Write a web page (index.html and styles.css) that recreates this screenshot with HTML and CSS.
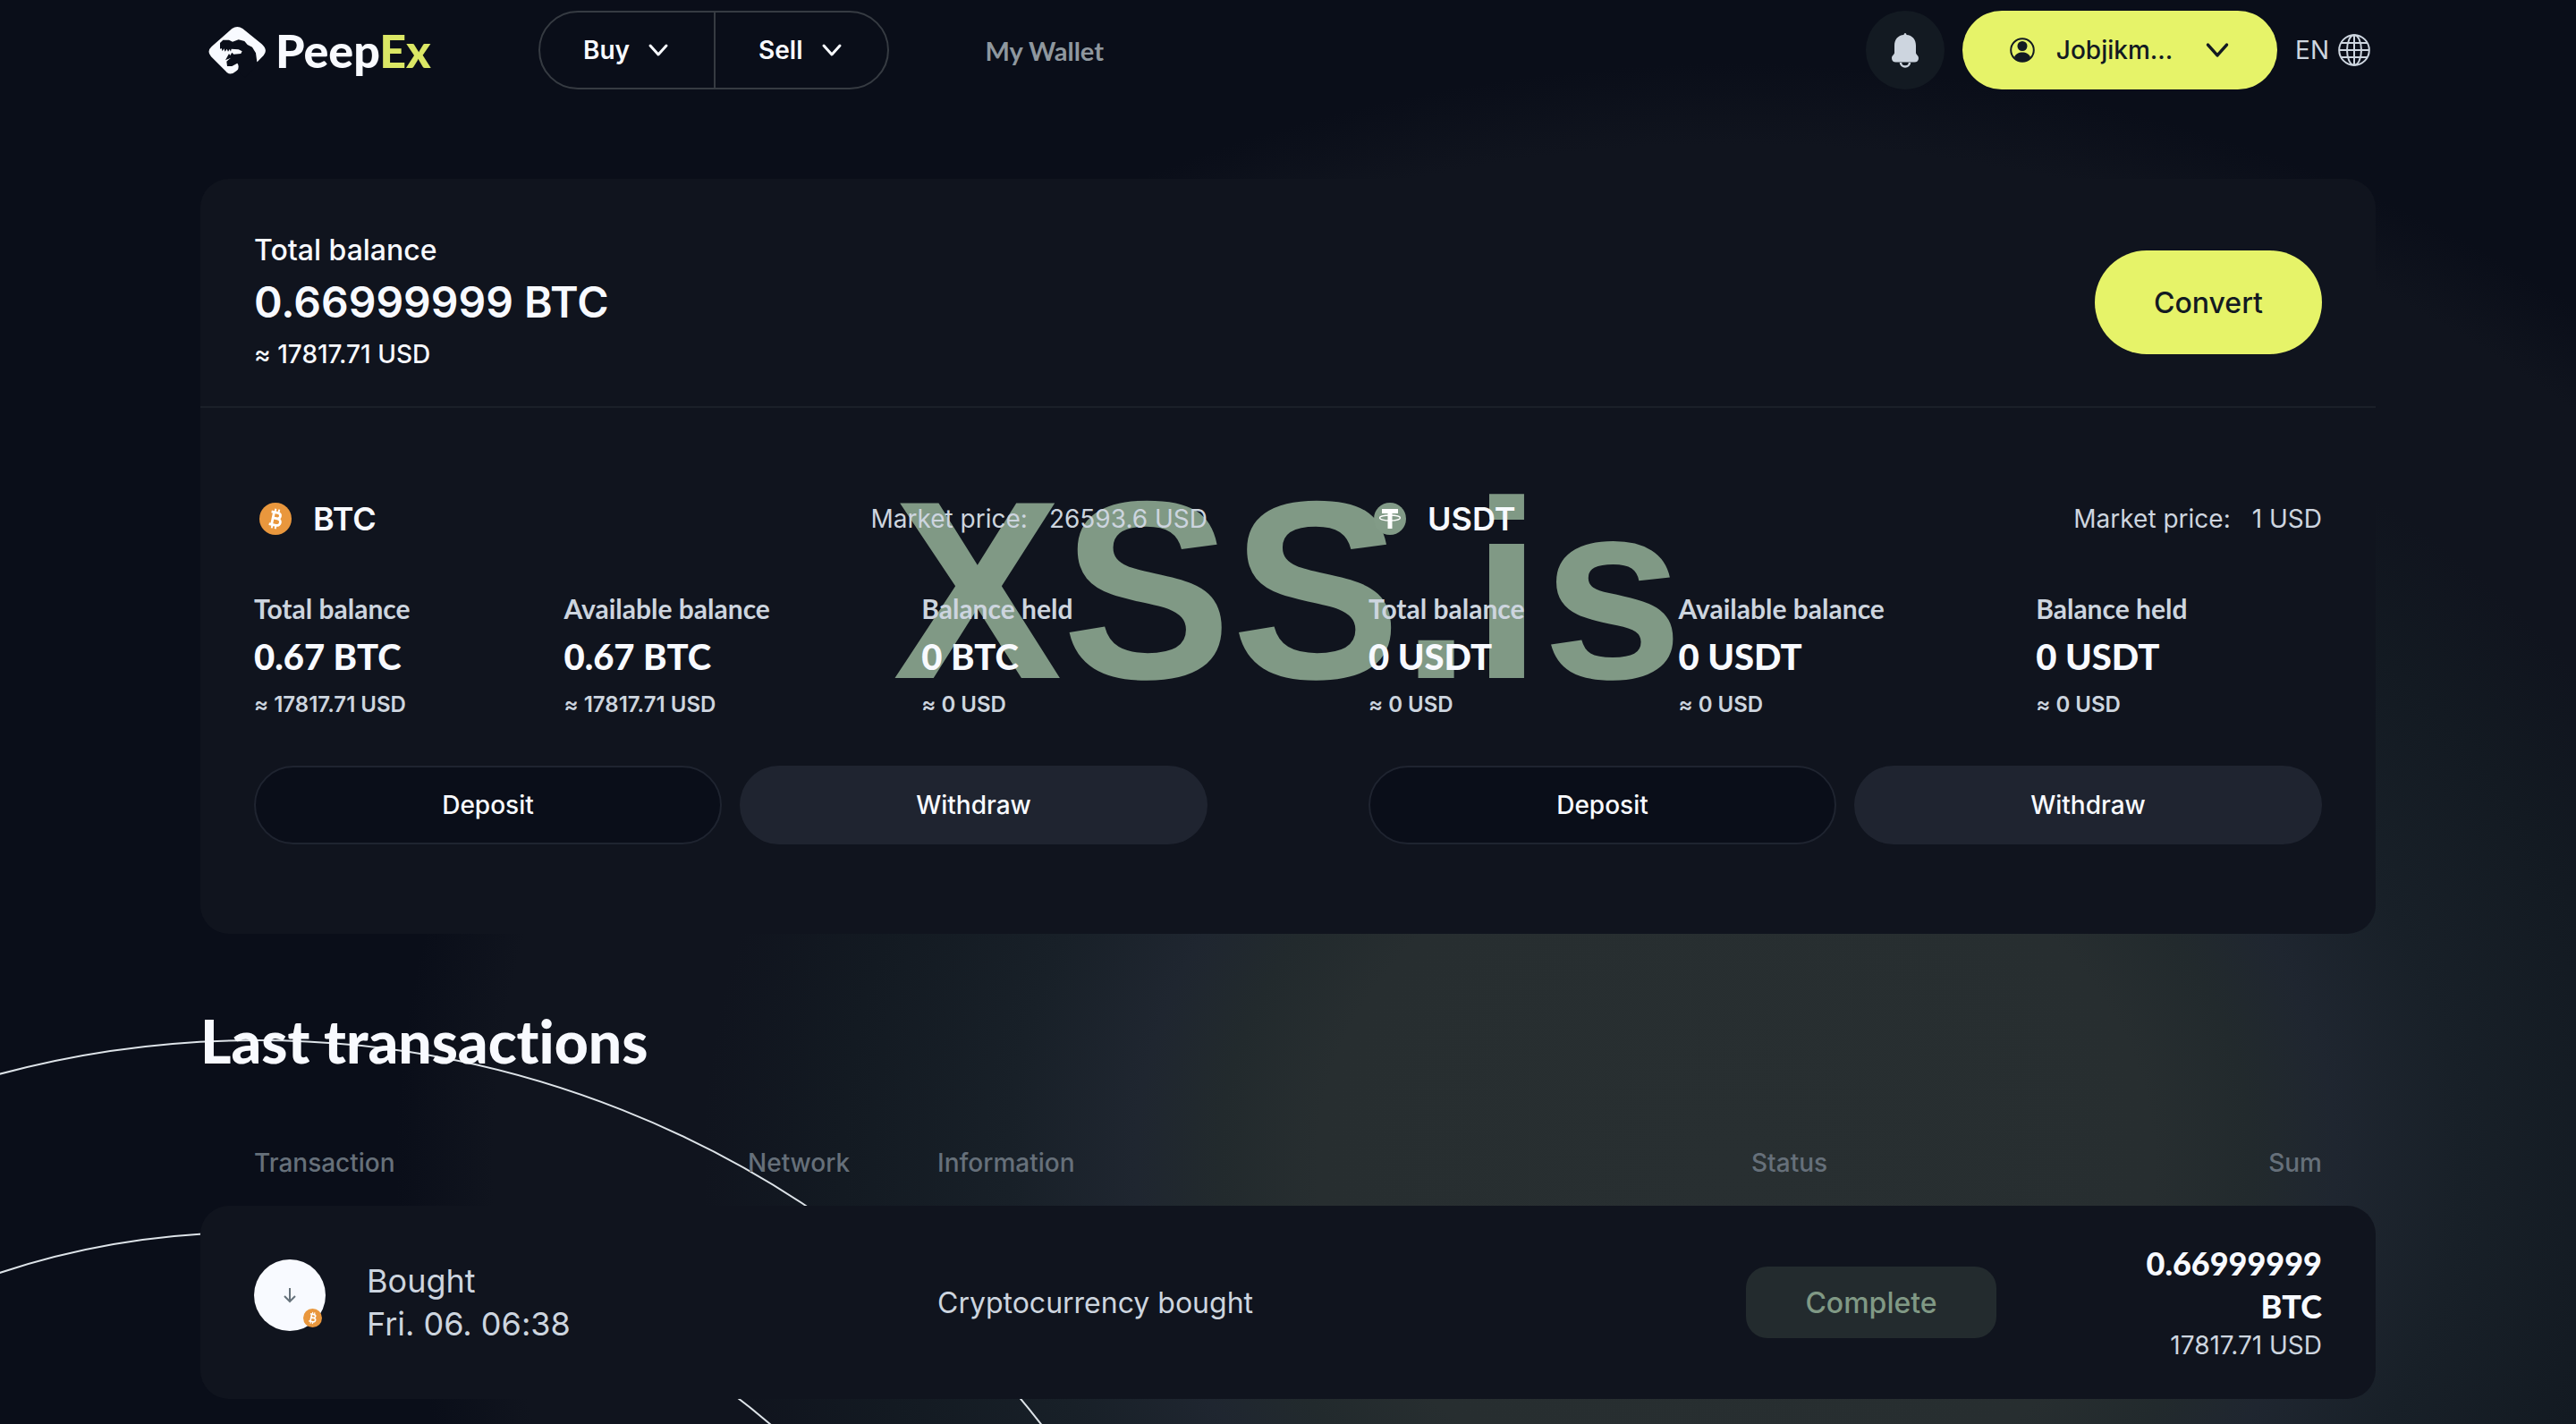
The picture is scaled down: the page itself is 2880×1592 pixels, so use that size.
FILE: index.html
```html
<!DOCTYPE html>
<html lang="en">
<head>
  <meta charset="UTF-8" />
  <meta name="viewport" content="width=device-width, initial-scale=1" />
  <title>PeepEx - My Wallet</title>
  <link rel="stylesheet" href="styles.css">
</head>
<body>
  <!-- Shared icons -->
  <svg class="sprite" aria-hidden="true">
    <symbol id="icon-chevron" viewBox="0 0 24 24">
      <path d="M3 7 L12 17 L21 7" fill="none" stroke="currentColor" stroke-width="3" stroke-linecap="round" stroke-linejoin="round" />
    </symbol>
    <symbol id="icon-btc" viewBox="0 0 36 36">
      <circle cx="18" cy="18" r="18" fill="#e9973d" />
      <g transform="rotate(12 18 18)" fill="none" stroke="#fff" stroke-width="2.8">
        <path d="M12 11 H19 C24 11 24 17.5 19 17.5 H15 H20 C25.5 17.5 25.5 25 20 25 H12" />
        <path d="M15 11 V25" />
        <path d="M16 7 V11 M20 7 V11 M16 25 V29 M20 25 V29" stroke-width="2" />
      </g>
    </symbol>
    <symbol id="icon-usdt" viewBox="0 0 36 36">
      <circle cx="18" cy="18" r="18" fill="#829b87" />
      <path d="M9 7 H27 V12 H20.500 V29 H15.500 V12 H9 Z" fill="#fff" />
      <ellipse cx="18" cy="17" rx="11.500" ry="3" fill="none" stroke="#fff" stroke-width="1.300" />
    </symbol>
  </svg>

  <!-- Decorative rings -->
  <svg class="rings" aria-hidden="true">
    <circle cx="287" cy="2273" r="1110" />
    <circle cx="280" cy="2273" r="895" />
  </svg>

  <header>
    <a href="#" class="logo">
      <svg class="logo-icon" viewBox="0 0 252 228" aria-hidden="true">
        <path d="M106 42 Q124 30 142 42 L206 94 Q228 114 212 132 L150 196 L126 180 L118 186 Q98 202 84 184 L36 136 Q20 118 38 102 Z" fill="#f8faff" />
        <path d="M66 110 L66 90 L76 80 L96 80 L108 86 L128 79 L148 84 L158 96 L174 104 L186 124 L190 154 L200 156 L150 206 L124 184 Q132 168 124 158 L106 168 L90 168 L88 152 L102 140 L84 148 L96 126 L100 132 L106 122 L112 128 L136 126 L140 118 L128 112 L104 110 L102 119 L98 111 L93 119 L89 110 L83 119 L79 109 L74 118 L71 108 Z" fill="#0a0e19" />
      </svg>
      <span class="logo-text">Peep<span class="accent">Ex</span></span>
    </a>

    <nav>
      <div class="trade">
        <button type="button">Buy <svg class="chevron"><use href="#icon-chevron" /></svg></button>
        <button type="button">Sell <svg class="chevron"><use href="#icon-chevron" /></svg></button>
      </div>
      <a href="#" class="nav-link">My Wallet</a>
    </nav>

    <div class="header-right">
      <button type="button" class="bell" aria-label="Notifications">
        <svg viewBox="0 0 36 44" aria-hidden="true">
          <path d="M18 3 C19 3 19.500 4 19.500 5 C26 5.500 30 10 30 17 V25 C30 27 33 28 33 31 C33 34 31 35.500 28.500 35.500 H7.500 C5 35.500 3 34 3 31 C3 28 6 27 6 25 V17 C6 10 10 5.500 16.500 5 C16.500 4 17 3 18 3 Z" fill="#cdd5df" />
          <path d="M13 36 A5 4.500 0 0 0 23 36" fill="none" stroke="#cdd5df" stroke-width="2.500" />
        </svg>
      </button>
      <button type="button" class="user">
        <svg class="user-icon" viewBox="0 0 28 28" aria-hidden="true">
          <circle cx="14" cy="14" r="12.800" fill="none" stroke="currentColor" stroke-width="2" />
          <circle cx="14" cy="9.500" r="5.500" fill="currentColor" />
          <path d="M5 22 C7 14.500 21 14.500 23 22 C19 28 9 28 5 22 Z" fill="currentColor" />
        </svg>
        <span>Jobjikm...</span>
        <svg class="chevron big"><use href="#icon-chevron" /></svg>
      </button>
      <button type="button" class="lang">
        EN
        <svg viewBox="0 0 36 36" aria-hidden="true">
          <g fill="none" stroke="currentColor" stroke-width="2">
            <circle cx="18" cy="18" r="16.800" />
            <ellipse cx="18" cy="18" rx="8" ry="16.800" />
            <path d="M18 1 V35 M1 18 H35 M4 10 H32 M4 26 H32" />
          </g>
        </svg>
      </button>
    </div>
  </header>

  <main>
    <section class="wallet">
      <div class="watermark">XSS.is</div>

      <div class="wallet-head">
        <div>
          <div class="total-label">Total balance</div>
          <div class="total-amount">0.66999999 BTC</div>
          <div class="total-usd">≈ 17817.71 USD</div>
        </div>
        <button type="button" class="convert">Convert</button>
      </div>

      <div class="coins">
        <div class="coin">
          <div class="coin-head">
            <svg class="coin-icon"><use href="#icon-btc" /></svg>
            <h2>BTC</h2>
            <p class="price"><span>Market price:</span><span>26593.6 USD</span></p>
          </div>
          <div class="balances">
            <div class="balance">
              <span class="label">Total balance</span>
              <span class="value">0.67 BTC</span>
              <span class="usd">≈ 17817.71 USD</span>
            </div>
            <div class="balance">
              <span class="label">Available balance</span>
              <span class="value">0.67 BTC</span>
              <span class="usd">≈ 17817.71 USD</span>
            </div>
            <div class="balance">
              <span class="label">Balance held</span>
              <span class="value">0 BTC</span>
              <span class="usd">≈ 0 USD</span>
            </div>
          </div>
          <div class="actions">
            <button type="button" class="deposit">Deposit</button>
            <button type="button" class="withdraw">Withdraw</button>
          </div>
        </div>

        <div class="coin">
          <div class="coin-head">
            <svg class="coin-icon"><use href="#icon-usdt" /></svg>
            <h2>USDT</h2>
            <p class="price"><span>Market price:</span><span>1 USD</span></p>
          </div>
          <div class="balances">
            <div class="balance">
              <span class="label">Total balance</span>
              <span class="value">0 USDT</span>
              <span class="usd">≈ 0 USD</span>
            </div>
            <div class="balance">
              <span class="label">Available balance</span>
              <span class="value">0 USDT</span>
              <span class="usd">≈ 0 USD</span>
            </div>
            <div class="balance">
              <span class="label">Balance held</span>
              <span class="value">0 USDT</span>
              <span class="usd">≈ 0 USD</span>
            </div>
          </div>
          <div class="actions">
            <button type="button" class="deposit">Deposit</button>
            <button type="button" class="withdraw">Withdraw</button>
          </div>
        </div>
      </div>
    </section>

    <section class="transactions">
      <h1>Last transactions</h1>
      <table>
        <thead>
          <tr>
            <th class="col-type">Transaction</th>
            <th class="col-network">Network</th>
            <th>Information</th>
            <th class="col-status">Status</th>
            <th class="col-sum">Sum</th>
          </tr>
        </thead>
        <tbody>
          <tr>
            <td class="col-type">
              <div class="type">
                <div class="type-icon">
                  <svg class="arrow" viewBox="0 0 16 18" aria-hidden="true">
                    <path d="M8 1 V16 M2 10 L8 16 L14 10" fill="none" stroke="#66727b" stroke-width="2" />
                  </svg>
                  <svg class="badge"><use href="#icon-btc" /></svg>
                </div>
                <div>Bought<br>Fri. 06. 06:38</div>
              </div>
            </td>
            <td class="col-network"></td>
            <td class="info">Cryptocurrency bought</td>
            <td class="col-status"><span class="status">Complete</span></td>
            <td class="col-sum">
              <div class="sum">0.66999999<br>BTC</div>
              <div class="sum-usd">17817.71 USD</div>
            </td>
          </tr>
        </tbody>
      </table>
    </section>
  </main>
</body>
</html>
```

FILE: styles.css
```css
* {
  box-sizing: border-box;
}

body {
  margin: 0;
  min-height: 100vh;
  position: relative;
  overflow: hidden;
  font-family: Inter, "Liberation Sans", sans-serif;
  font-size: 28px;
  font-variant-ligatures: none;
  color: #f8faff;
  background-color: #0a0e19;
  background-image: radial-gradient(ellipse 1560px 1280px at 1940px 1300px, #282f31 0%, #272e30 30%, #222a2d 37%, #1f2630 43%, #182028 52%, #131a22 64%, #10141e 74%, #10141e 89%, #0a0e19 96%);
}

button {
  font-family: inherit;
  border: none;
  background: none;
  color: inherit;
  padding: 0;
  cursor: pointer;
}

a {
  text-decoration: none;
  color: inherit;
}

.sprite {
  position: absolute;
  width: 0;
  height: 0;
}

.rings {
  position: absolute;
  top: 0;
  left: 0;
  width: 100%;
  height: 100%;
  pointer-events: none;
}

.rings circle {
  fill: none;
  stroke: #dde3e8;
  stroke-width: 2;
}

/* Header */
header {
  position: relative;
  display: flex;
  align-items: center;
  margin: 0 224px;
  padding-top: 12px;
}

.logo {
  display: flex;
  align-items: center;
  width: 378px;
}

.logo-icon {
  width: 84px;
  height: 76px;
}

.logo-text {
  font-family: Lato, sans-serif;
  font-weight: 900;
  font-size: 52px;
}

.accent {
  color: #dbe765;
}

nav {
  display: flex;
  align-items: center;
  gap: 108px;
}

.trade {
  display: flex;
  height: 88px;
  border: 2px solid #363b42;
  border-radius: 44px;
}

.trade button {
  display: flex;
  align-items: center;
  gap: 20px;
  padding: 0 50px 0 48px;
  font-size: 28px;
  font-weight: 600;
}

.trade button + button {
  border-left: 2px solid #363b42;
}

.chevron {
  width: 24px;
  height: 24px;
}

.chevron.big {
  width: 28px;
  height: 28px;
  margin-left: 12px;
}

.nav-link {
  font-family: Lato, sans-serif;
  font-weight: 700;
  font-size: 29px;
  color: #8f989f;
}

.header-right {
  display: flex;
  align-items: center;
  gap: 20px;
  margin-left: auto;
}

.bell {
  display: flex;
  align-items: center;
  justify-content: center;
  width: 88px;
  height: 88px;
  border-radius: 50%;
  background: #131a22;
}

.bell svg {
  width: 36px;
  height: 44px;
}

.user {
  display: flex;
  align-items: center;
  justify-content: center;
  gap: 24px;
  width: 352px;
  height: 88px;
  border-radius: 44px;
  background: #e6f369;
  color: #131a22;
  font-size: 28px;
  font-weight: 500;
}

.user-icon {
  width: 28px;
  height: 28px;
}

.lang {
  display: flex;
  align-items: center;
  gap: 10px;
  padding-right: 6px;
  font-size: 28px;
  color: #cdd5df;
}

.lang svg {
  width: 36px;
  height: 36px;
}

main {
  position: relative;
  margin: 100px 224px 0;
}

/* Wallet card */
.wallet {
  position: relative;
  z-index: 0;
  border-radius: 32px;
  background: #10141e;
}

.watermark {
  position: absolute;
  top: 300px;
  left: 50%;
  transform: translateX(-50%);
  z-index: -1;
  font-family: "Liberation Sans", Arial, sans-serif;
  font-weight: 700;
  font-size: 284px;
  line-height: 320px;
  color: #809985;
}

.wallet-head {
  display: flex;
  align-items: center;
  justify-content: space-between;
  padding: 56px 60px 34px;
  border-bottom: 2px solid #1b2029;
}

.total-label {
  font-size: 32px;
  font-weight: 500;
  line-height: 48px;
}

.total-amount {
  font-size: 48px;
  font-weight: 600;
  line-height: 68px;
}

.total-usd {
  font-size: 28px;
  font-weight: 500;
  line-height: 48px;
}

.convert {
  width: 254px;
  height: 116px;
  border-radius: 58px;
  background: #e6f369;
  color: #131a22;
  font-size: 32px;
  font-weight: 500;
}

.coins {
  display: grid;
  grid-template-columns: 1fr 1fr;
  gap: 180px;
  padding: 100px 60px;
}

.coin-head {
  display: flex;
  align-items: center;
  height: 48px;
}

.coin-icon {
  width: 36px;
  height: 36px;
  margin: 0 24px 0 6px;
}

.coin-head h2 {
  margin: 0;
  font-size: 36px;
  font-weight: 600;
}

.price {
  display: flex;
  gap: 24px;
  margin: 0 0 0 auto;
  color: #cdd5df;
}

.balances {
  display: grid;
  grid-template-columns: 13fr 15fr 12fr;
  margin-top: 56px;
}

.balance {
  display: flex;
  flex-direction: column;
  gap: 6px;
}

.label {
  font-family: Lato, sans-serif;
  font-size: 30px;
  font-weight: 700;
  line-height: 40px;
  color: #cdd5df;
}

.value {
  font-family: Lato, sans-serif;
  font-size: 40px;
  font-weight: 900;
  line-height: 56px;
}

.usd {
  font-size: 24px;
  font-weight: 600;
  line-height: 40px;
  color: #cdd5df;
}

.actions {
  display: grid;
  grid-template-columns: 1fr 1fr;
  gap: 20px;
  margin-top: 48px;
}

.actions button {
  height: 88px;
  border-radius: 44px;
  font-size: 28px;
  font-weight: 500;
}

.actions .deposit {
  border: 2px solid #1f2430;
  background: #0a0e19;
}

.actions .withdraw {
  background: #1f2430;
}

/* Transactions */
.transactions h1 {
  margin: 80px 0 48px;
  font-family: Lato, sans-serif;
  font-size: 66px;
  font-weight: 900;
  line-height: 80px;
}

table {
  width: 100%;
  table-layout: fixed;
  border-collapse: separate;
  border-spacing: 0;
}

th {
  height: 96px;
  padding: 0;
  text-align: left;
  font-size: 28px;
  font-weight: 500;
  color: #66707a;
}

th.col-status {
  padding-left: 6px;
}

td {
  height: 216px;
  padding: 0;
  background: #10141e;
}

td:first-child {
  border-radius: 32px 0 0 32px;
}

td:last-child {
  border-radius: 0 32px 32px 0;
}

.col-type {
  width: 612px;
  padding-left: 60px;
}

.col-network {
  width: 212px;
}

.col-status {
  width: 400px;
}

.col-sum {
  width: 304px;
  padding-right: 60px;
  text-align: right;
}

.type {
  display: flex;
  align-items: flex-start;
  gap: 46px;
  font-size: 36px;
  line-height: 48px;
  color: #cdd5df;
}

.type-icon {
  position: relative;
  display: flex;
  align-items: center;
  justify-content: center;
  width: 80px;
  height: 80px;
  border-radius: 50%;
  background: #f8faff;
}

.arrow {
  width: 16px;
  height: 18px;
}

.badge {
  position: absolute;
  right: 4px;
  bottom: 4px;
  width: 21px;
  height: 21px;
}

.info {
  font-size: 32px;
  color: #cdd5df;
}

.status {
  display: inline-flex;
  align-items: center;
  justify-content: center;
  width: 280px;
  height: 80px;
  border-radius: 24px;
  background: #232b2e;
  color: #809985;
  font-size: 32px;
  font-weight: 500;
}

.sum {
  font-family: Lato, sans-serif;
  font-size: 36px;
  font-weight: 900;
  line-height: 48px;
}

.sum-usd {
  line-height: 40px;
  color: #cdd5df;
}
```
